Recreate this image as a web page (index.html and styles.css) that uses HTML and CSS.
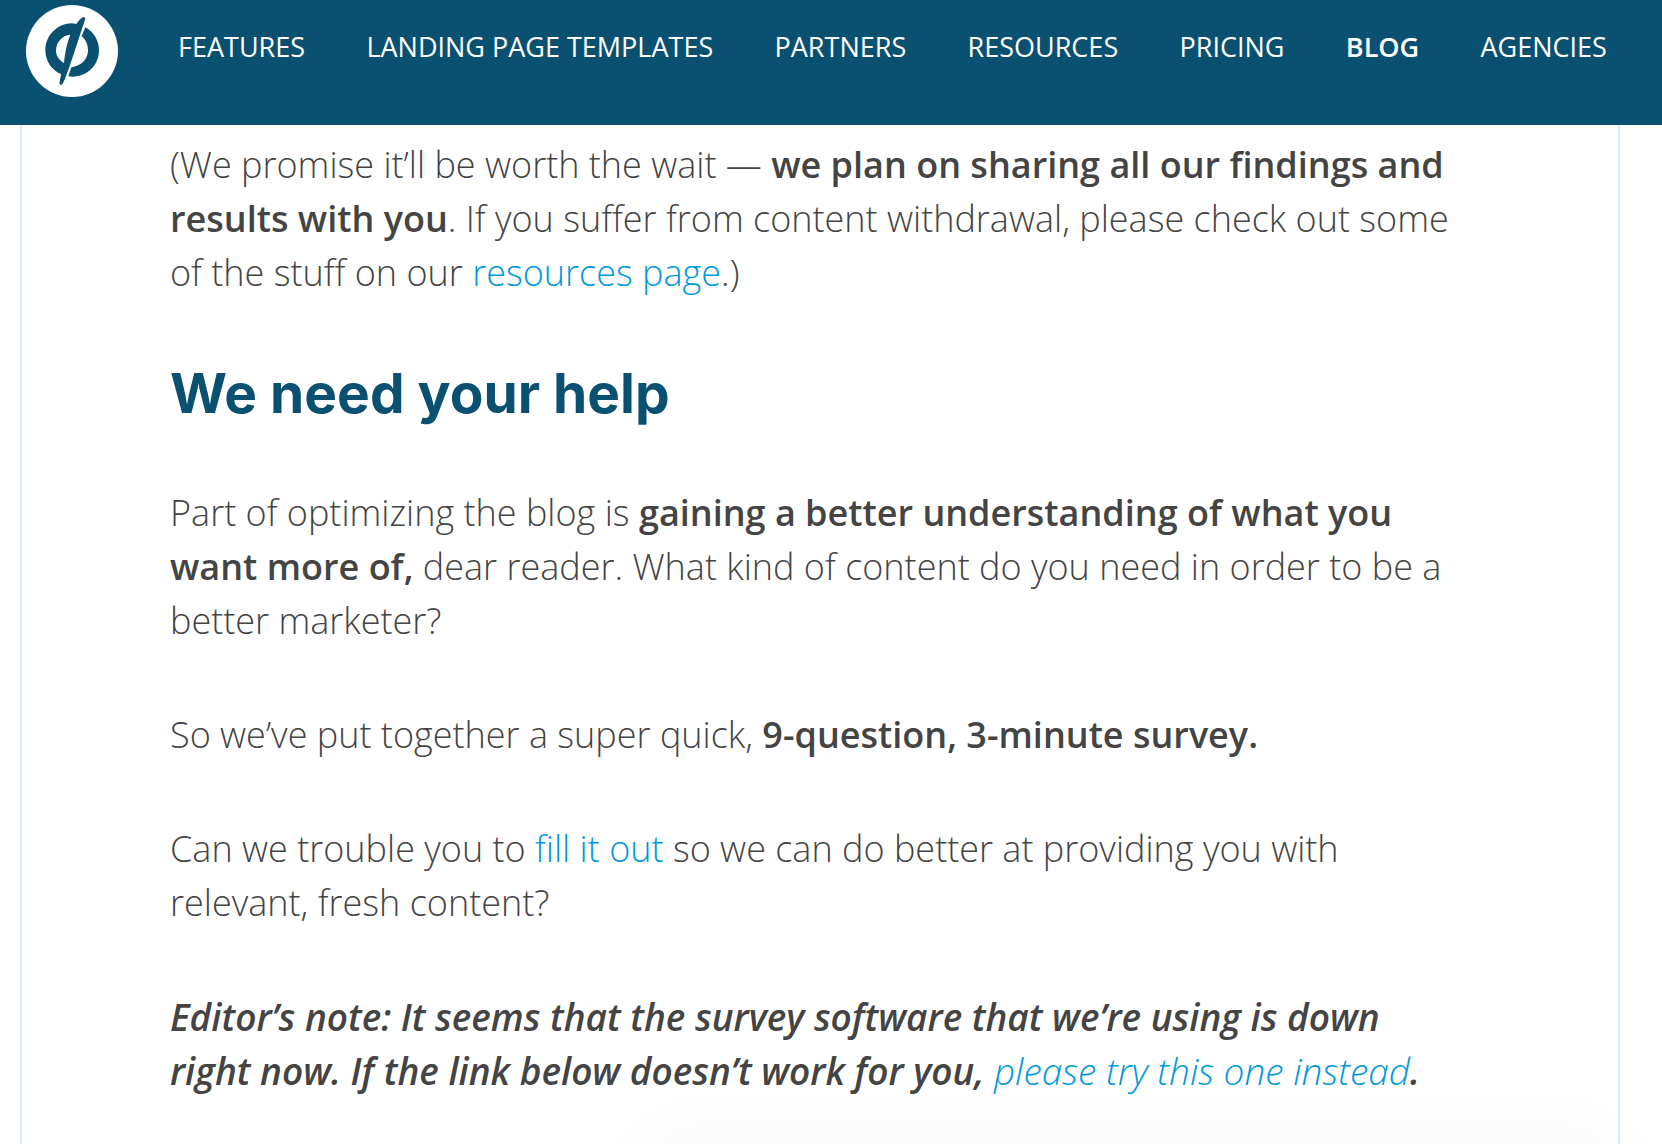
FILE: index.html
```
<!DOCTYPE html>
<html lang="en">
<head>
    <meta charset="UTF-8">
    <meta name="viewport" content="width=device-width, initial-scale=1.0">
    <title>We need your help</title>

    <link rel="stylesheet" href="styles.css">
</head>
<body>
    <header class="header">
        <a class="logo" href="#" aria-label="Home">
            <svg viewBox="48 15 276 276" width="92" height="92">
                <circle cx="186" cy="153" r="138" fill="#fff"/>
                <g fill="#0a5070">
                    <path d="M220 51 Q226 51 226 56 C212 98 192 160 179 198 C170 223 163 243 157 253 Q152 256 148 251 C150 240 152 231 153 222 C126 212 106 184 106 151 C106 106 143 70 186 70 L199 72 C204 65 213 53 220 51 Z"/>
                    <path d="M226 82 C250 94 267 121 267 151 C267 196 231 230 188 230 L175 229 L184 202 C213 198 234 178 234 151 C234 133 227 119 215 109 Z"/>
                </g>
                <path d="M181 104 C171 128 164 163 162 189 C148 180 138 168 138 152 C138 124 160 105 181 104 Z" fill="#fff"/>
            </svg>
        </a>
        <nav class="nav">
            <a href="#">FEATURES</a>
            <a href="#">LANDING PAGE TEMPLATES</a>
            <a href="#">PARTNERS</a>
            <a href="#">RESOURCES</a>
            <a href="#">PRICING</a>
            <a href="#" class="active">BLOG</a>
            <a href="#">AGENCIES</a>
        </nav>
    </header>

    <main class="post">
        <p>(We promise it’ll be worth the wait — <strong>we plan on sharing all our findings and <br>results with you</strong>. If you suffer from content withdrawal, please check out some <br>of the stuff on our <a href="#">resources page</a>.)</p>

        <h2>We need your help</h2>

        <p>Part of optimizing the blog is <strong>gaining a better understanding of what you <br>want more of,</strong> dear reader. What kind of content do you need in order to be a <br>better marketer?</p>

        <p>So we’ve put together a super quick, <strong>9-question, 3-minute survey.</strong></p>

        <p>Can we trouble you to <a href="#">fill it out</a> so we can do better at providing you with <br>relevant, fresh content?</p>

        <p class="note"><strong>Editor’s note: It seems that the survey software that we’re using is down <br>right now. If the link below doesn’t work for you, <a href="#">please try this one instead</a>.</strong></p>
    </main>

    <div class="popup"></div>
</body>
</html>
```
FILE: styles.css
```
*{
    box-sizing: border-box;
}

body{
    margin: 0;
    min-height: 100vh;
    display: flex;
    flex-direction: column;
    background-color: #fff;
    color: #444;
    font-family: "Open Sans", "Noto Sans", sans-serif;
}

a{
    text-decoration: none;
}

.header{
    display: flex;
    align-items: flex-start;
    height: 125px;
    padding: 5px 55px 0 26px;
    background-color: #0a5070;
}

.logo svg{
    display: block;
}

.nav{
    flex: 1;
    display: flex;
    justify-content: space-between;
    margin-left: 60px;
    font-size: 27px;
    line-height: 84px;
    white-space: nowrap;
}

.nav a{
    color: #fff;
}

.nav .active{
    font-weight: 600;
}

.post{
    flex: 1;
    margin: 0 42px 0 20px;
    padding: 13px 140px 46px 148px;
    border: solid #dceaf3;
    border-width: 0 2px;
    font-size: 36px;
    font-weight: 350;
    line-height: 54px;
}

.post p{
    margin: 0 0 60px;
}

.post p:last-child{
    margin-bottom: 0;
}

.post h2{
    margin: 0 0 60px;
    color: #0a5070;
    font-family: Inter, "Open Sans", sans-serif;
    font-size: 55px;
    font-weight: 700;
    line-height: 66px;
}

.post strong{
    font-weight: 600;
}

.post a{
    color: #0098db;
    font-weight: 350;
}

.post .note{
    font-size: 37px;
    font-style: italic;
}

/* sits just below the fold, only its shadow shows */
.popup{
    position: fixed;
    top: 100%;
    right: 50px;
    width: 960px;
    height: 200px;
    box-shadow: 0 0 80px rgba(0, 0, 0, 0.04);
}
```
